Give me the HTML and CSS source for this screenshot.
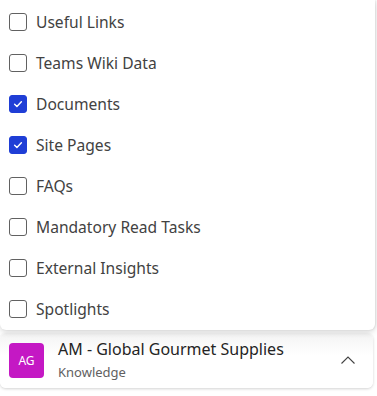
FILE: index.html
```html
<!DOCTYPE html>
<html>
<head>
<meta charset="utf-8">
<link rel="stylesheet" href="styles.css">
</head>
<body>
<div class="page">
  <div class="menu">
    <label class="row"><span class="box"></span><span class="lbl">Useful Links</span></label>
    <label class="row"><span class="box"></span><span class="lbl">Teams Wiki Data</span></label>
    <label class="row"><span class="box checked"><svg viewBox="0 0 18 18" width="18" height="18"><path d="M5.2 9.3 L7.8 11.8 L12.8 6.5" fill="none" stroke="#fff" stroke-width="1.6" stroke-linecap="round" stroke-linejoin="round"/></svg></span><span class="lbl">Documents</span></label>
    <label class="row"><span class="box checked"><svg viewBox="0 0 18 18" width="18" height="18"><path d="M5.2 9.3 L7.8 11.8 L12.8 6.5" fill="none" stroke="#fff" stroke-width="1.6" stroke-linecap="round" stroke-linejoin="round"/></svg></span><span class="lbl">Site Pages</span></label>
    <label class="row"><span class="box"></span><span class="lbl">FAQs</span></label>
    <label class="row"><span class="box"></span><span class="lbl">Mandatory Read Tasks</span></label>
    <label class="row"><span class="box"></span><span class="lbl">External Insights</span></label>
    <label class="row"><span class="box"></span><span class="lbl">Spotlights</span></label>
  </div>
  <div class="card">
    <div class="avatar">AG</div>
    <div class="info">
      <div class="title">AM - Global Gourmet Supplies</div>
      <div class="sub">Knowledge</div>
    </div>
    <svg class="chev" viewBox="0 0 16 10" width="16" height="10"><path d="M1.5 8.5 L8 2 L14.5 8.5" fill="none" stroke="#424242" stroke-width="1.1"/></svg>
  </div>
</div>
</body>
</html>
```
FILE: styles.css
```css
html, body {
  margin: 0;
  padding: 0;
  background: #ffffff;
}
body {
  font-family: "Noto Sans", "Open Sans", sans-serif;
  width: 377px;
  height: 396px;
  overflow: hidden;
}
.page {
  display: flex;
  flex-direction: column;
  width: 377px;
}
.menu {
  width: 375px;
  height: 330px;
  box-sizing: border-box;
  padding-top: 1px;
  background: #fff;
  border-radius: 0 0 6px 6px;
  box-shadow: 0 2px 6px rgba(0,0,0,0.16), 1px 0 2px rgba(0,0,0,0.08);
  position: relative;
  z-index: 2;
  display: flex;
  flex-direction: column;
}
.row {
  height: 41px;
  display: flex;
  align-items: center;
  padding-left: 9px;
}
.box {
  width: 18px;
  height: 18px;
  box-sizing: border-box;
  border: 1px solid #616161;
  border-radius: 3px;
  display: flex;
  align-items: center;
  justify-content: center;
  flex-shrink: 0;
}
.box.checked {
  background: #1f3ed6;
  border-color: #1f3ed6;
}
.box svg { display: block; }
.lbl {
  margin-left: 9px;
  font-size: 15.6px;
  color: #424242;
}
.card {
  margin-top: 3px;
  width: 373px;
  height: 55px;
  box-sizing: border-box;
  border-radius: 6px;
  background: linear-gradient(#f3f3f3, #ffffff 40%);
  box-shadow: 0 1px 3px rgba(0,0,0,0.18);
  display: flex;
  align-items: center;
  padding-left: 9px;
  padding-right: 17px;
}
.avatar {
  width: 35px;
  height: 35px;
  border-radius: 4px;
  background: #c418c4;
  color: #fff;
  font-size: 12px;
  display: flex;
  align-items: center;
  justify-content: center;
  flex-shrink: 0;
}
.info {
  margin-left: 14px;
  flex: 1;
  display: flex;
  flex-direction: column;
}
.title {
  font-size: 16px;
  color: #242424;
  line-height: 20px;
  margin-top: -2px;
}
.sub {
  font-size: 13px;
  color: #616161;
  line-height: 18px;
  margin-top: 4px;
}
.chev {
  display: block;
  margin-top: -2px;
}
```
